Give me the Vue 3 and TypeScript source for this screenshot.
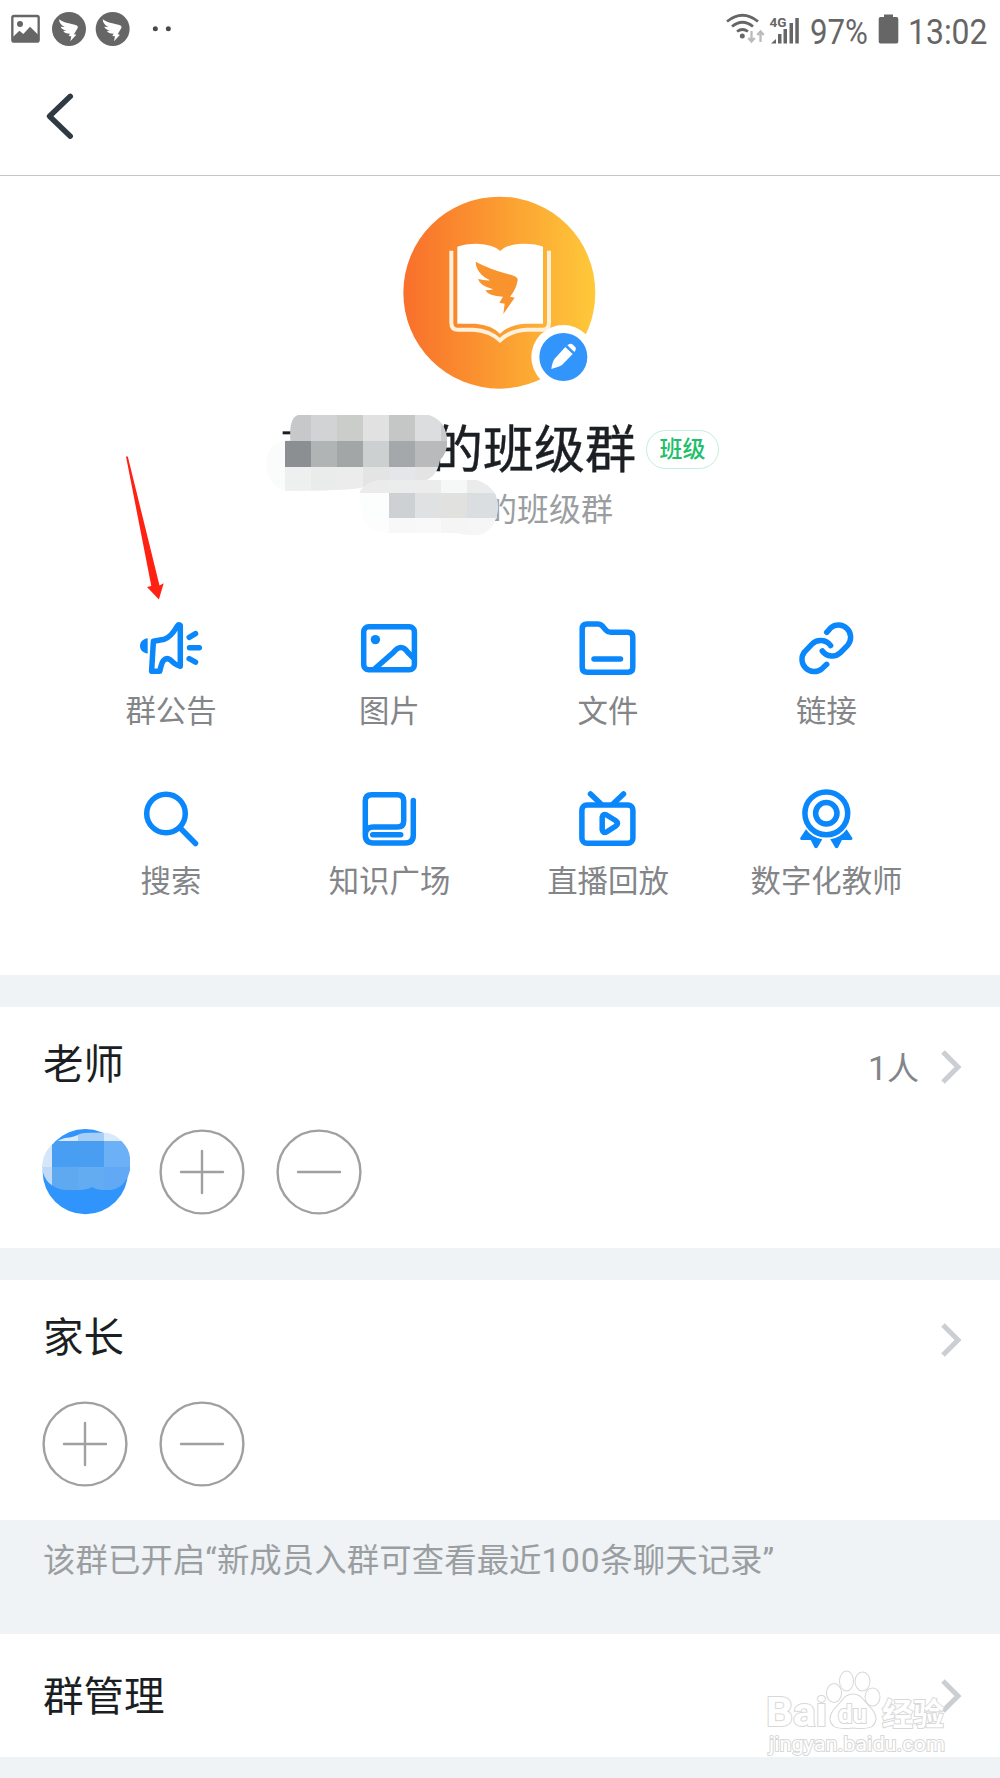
<script setup lang="ts">
interface Action {
  key: string
  label: string
}

interface Cell {
  x: number
  y: number
  w: number
  h: number
  fill: string
}

const actions: Action[] = [
  { key: 'notice', label: '群公告' },
  { key: 'image', label: '图片' },
  { key: 'file', label: '文件' },
  { key: 'link', label: '链接' },
  { key: 'search', label: '搜索' },
  { key: 'book', label: '知识广场' },
  { key: 'live', label: '直播回放' },
  { key: 'medal', label: '数字化教师' },
]

const row = (y: number, h: number, xs: number[], fills: string[]): Cell[] =>
  fills.map((fill, i) => ({ x: xs[i], y, w: xs[i + 1] - xs[i], h, fill }))

const upperX = [40, 106, 183, 261, 339, 417, 495, 573, 620]
const lowerX = [320, 417, 495, 573, 650, 760]
const faceX = [120, 156, 234, 312, 395]

const upperCells: Cell[] = [
  ...row(44, 78, upperX, ['#c6c8ca', '#c6c8ca', '#d2d3d5', '#cbcdcb', '#e1e1e1', '#c5c7c6', '#dcdddf', '#c9cacb']),
  ...row(122, 78, upperX, ['#fafbfb', '#8b8f91', '#b0b4b5', '#a2a6a7', '#ccd0d1', '#a4a8ab', '#b9babc', '#b9b9ba']),
  ...row(200, 80, upperX, ['#fafbfb', '#eef0f0', '#eaecec', '#ececec', '#e4e4e4', '#e5e6e9', '#e4e4e5', '#e4e4e5']),
]
const lowerCells: Cell[] = [
  ...row(236, 42, lowerX, ['#ebebeb', '#ebecec', '#ececec', '#f6f8f7', '#ebebeb']),
  ...row(278, 77, lowerX, ['#fcfdfd', '#cdd1d4', '#e0e1e3', '#e1e1e0', '#dadee1']),
  ...row(355, 55, lowerX, ['#fdfdfd', '#f8f8f8', '#f9f9f9', '#f5f5f5', '#f6f6f6']),
]
const faceCells: Cell[] = [
  ...row(510, 33, faceX, ['#d8e8f9', '#d9eafb', '#a5cff8', '#d9eafb']),
  ...row(543, 77, faceX, ['#d5e6f8', '#489ef2', '#4a9ef2', '#6cb0f6']),
  ...row(620, 75, faceX, ['#bfd9f6', '#5ea9f0', '#63acf1', '#61a9f4']),
]
</script>

<template>
  <div class="screen">
    <header class="status">
      <svg class="status-left" width="200" height="60" viewBox="0 0 600 180">
        <rect x="37" y="48" width="79" height="77" rx="5" fill="none" stroke="#666" stroke-width="7" />
        <circle cx="60" cy="72" r="9" fill="#666" />
        <path d="M38 112 58 92 70 102 90 80 116 106V126H38Z" fill="#666" />
        <g v-for="dx in [0, 131]" :key="dx" :transform="`translate(${dx} 0)`">
          <circle cx="207" cy="87" r="51" fill="#666" />
          <path
            d="M177 58Q192 69 224 74Q236 77 233 84L222 103 229 104 211 124 214 109 206 108 210 101Q194 101 190 93L199 92Q184 88 182 80L194 81Q178 73 177 58Z"
            fill="#fff"
          />
        </g>
        <circle cx="466" cy="86" r="7.500" fill="#4a4a4a" />
        <circle cx="505" cy="86" r="7.500" fill="#4a4a4a" />
      </svg>
      <svg class="status-right" width="300" height="60" viewBox="0 0 300 60">
        <g fill="none" stroke="#666" stroke-width="2.700">
          <path d="M27 21.500Q42.500 9 58 21.500" />
          <path d="M32 26.500Q42.500 18 53 26.500" />
          <path d="M37 31.500Q42.500 27.500 48 31.500" />
        </g>
        <circle cx="42.300" cy="36" r="2.500" fill="#666" />
        <g fill="none" stroke="#bbb" stroke-width="2.300">
          <path d="M51.500 31V41M48.300 38 51.500 41.500 54.700 38" />
          <path d="M60.500 42V32M57.300 35 60.500 31.500 63.700 35" />
        </g>
        <text x="69.500" y="27" font-size="12.500" font-weight="700" textLength="17" lengthAdjust="spacingAndGlyphs">4G</text>
        <g fill="#666">
          <path d="M71 43.500 76 39V43.500Z" />
          <rect x="78" y="34" width="3.500" height="9.500" />
          <rect x="83.500" y="29" width="3.500" height="14.500" />
          <rect x="89.500" y="23" width="3.500" height="20.500" />
          <rect x="95.300" y="18" width="3.500" height="25.500" />
          <path d="M180.500 17H184V14.500H193V17H196.500Q198.300 17 198.300 19V41.500Q198.300 43.500 196.500 43.500H180.500Q178.700 43.500 178.700 41.500V19Q178.700 17 180.500 17Z" />
        </g>
        <text x="110" y="43.500" font-size="35.500" textLength="58" lengthAdjust="spacingAndGlyphs">97%</text>
        <text x="208" y="43.500" font-size="35.500" textLength="79.500" lengthAdjust="spacingAndGlyphs">13:02</text>
      </svg>
    </header>

    <nav class="nav">
      <svg width="40" height="60" viewBox="0 0 40 60">
        <path d="M30.300 10.300 9.500 30.200 30.300 50.200" fill="none" stroke="#303a45" stroke-width="5.400" stroke-linecap="round" stroke-linejoin="round" />
      </svg>
    </nav>

    <section class="profile">
      <svg class="avatar" width="220" height="220" viewBox="0 0 660 660">
        <defs>
          <linearGradient id="sun" x1="0" y1="0" x2="1" y2="0">
            <stop offset="0" stop-color="#f96f2b" />
            <stop offset=".5" stop-color="#fb9c31" />
            <stop offset="1" stop-color="#fec93a" />
          </linearGradient>
        </defs>
        <circle cx="328" cy="338" r="288" fill="url(#sun)" />
        <path d="M184 212V428Q184 449 204 449H250Q300 452 330 481Q360 452 410 449H458Q477 449 477 428V212" fill="none" stroke="#fff1dc" stroke-width="12" />
        <path d="M202 200Q225 191 260 191Q312 193 331 213Q350 193 400 191Q440 191 459 200V431H405Q355 435 330 461Q305 435 257 431H202Z" fill="#fff" />
        <path
          d="M257 245Q300 268 350 281Q386 289 383 301Q378 330 360 350L374 353 340 402 344 371 328 368 339 350Q295 348 286 331Q300 331 310 328Q270 318 264 297Q285 302 300 301Q258 280 257 245Z"
          fill="#f8932e"
        />
        <circle cx="520" cy="531" r="96" fill="#fff" />
        <circle cx="520" cy="531" r="72" fill="#3295fb" />
        <path d="M526 501 548 522 516 555Q510 560 484 567Q487 545 494 536Z" fill="#fff" />
        <path d="M532 496Q540 488 549 494L556 502Q560 508 553 516Z" fill="#fff" />
      </svg>

      <div class="title-row">
        <h1>的班级群</h1>
        <span class="tag">班级</span>
      </div>
      <p class="subtitle">的班级群</p>

      <svg class="mosaic" width="480" height="150" viewBox="0 0 1440 450">
        <defs>
          <clipPath id="upper">
            <path d="M121 122Q116 44 150 44H535Q592 62 592 130Q588 165 570 180Q560 245 500 245H430L325 265Q290 272 110 273Q50 262 50 190Q52 125 110 122Z" />
          </clipPath>
          <clipPath id="lower">
            <path d="M328 278Q350 235 420 240H680Q745 262 745 325Q735 400 680 405Q640 405 620 399H417Q340 395 335 335Z" />
          </clipPath>
        </defs>
        <rect x="98" y="94" width="30" height="9" fill="#1b1f23" />
        <g clip-path="url(#upper)" shape-rendering="crispEdges">
          <rect v-for="(c, i) in upperCells" :key="i" :x="c.x" :y="c.y" :width="c.w" :height="c.h" :fill="c.fill" />
        </g>
        <g clip-path="url(#lower)" shape-rendering="crispEdges">
          <rect v-for="(c, i) in lowerCells" :key="i" :x="c.x" :y="c.y" :width="c.w" :height="c.h" :fill="c.fill" />
        </g>
      </svg>

      <svg class="pointer" width="50" height="150" viewBox="0 0 50 150">
        <path d="M6 6.500 7.800 6.500 39.500 135.500 43.700 133.300 38.900 149.500 27 137 31.300 136Z" fill="#ff2213" />
      </svg>

      <div class="actions">
        <div v-for="a in actions" :key="a.key" class="action">
          <svg class="icon" width="64" height="64" viewBox="0 0 64 64">
            <template v-if="a.key === 'notice'">
              <path class="solid" d="M9.700 22.300V37.500C4.500 37 2 33.500 2 30S4.500 22.800 9.700 22.300Z" />
              <path d="M15.400 25.200 13.600 55.200H21.800Q23.500 47 25.500 44.500Q28.500 41 32.500 44Q37 49 42.300 50.200V9.300Q40.500 8.300 39.300 10Q33 21 26.500 23.200Q21 24.200 15.400 25.200Z" />
              <path d="M51.200 21.300 57.500 17.600M51.500 31.700H61.300M51.200 42.700 57.500 46.200" />
            </template>
            <template v-else-if="a.key === 'image'">
              <rect x="6.700" y="10.700" width="50.700" height="43" rx="5" />
              <circle class="solid" cx="18.400" cy="23.600" r="4.700" />
              <path d="M17.500 53 36.300 36.500Q44.200 26.500 51 36.500L57 42.500" />
            </template>
            <template v-else-if="a.key === 'file'">
              <path d="M12 8H22.500Q25.500 8 27.500 10.200L31 14.200Q32.800 16.300 35.500 16.300H52.800Q57.800 16.300 57.800 21.300V51.300Q57.800 56.300 52.800 56.300H12.200Q7.200 56.300 7.200 51.300V13Q7.200 8 12 8Z" />
              <path d="M19 43H45.500" />
            </template>
            <template v-else-if="a.key === 'link'">
              <path d="M32.700 16.300 36.700 11.800A12.200 12.200 0 0 1 54 28.800L46.600 36.500A12.200 12.200 0 0 1 28.300 35" />
              <path d="M32.700 48.300 27.900 52.800A12.200 12.200 0 0 1 10.600 35.800L18 28.100A12.200 12.200 0 0 1 36.600 29.600" />
            </template>
            <template v-else-if="a.key === 'search'">
              <circle cx="28" cy="27.500" r="19.300" />
              <path d="M42.200 42 57.500 57.500" />
            </template>
            <template v-else-if="a.key === 'book'">
              <path d="M8.300 49V15Q8.300 8.700 14.600 8.700H40.400Q46.700 8.700 46.700 15V35Q46.700 41 40.400 41H16.300Q8.300 41 8.300 49Q8.300 57 16.300 57H48.300Q56.300 57 56.300 49V14.500" />
              <path d="M15.700 48.700H43.700" />
            </template>
            <template v-else-if="a.key === 'live'">
              <rect x="6.900" y="19" width="51" height="38.300" rx="5" />
              <path d="M15.500 8 25.500 17.500M48.500 8 38.500 17.500" />
              <path d="M27.200 31Q28 27.300 31.500 29L40.500 34.500Q44.500 37.400 40.500 40.200L31.500 46Q28 47.500 27.200 44Z" />
            </template>
            <template v-else>
              <circle cx="32.300" cy="27.300" r="21.400" />
              <circle cx="32.300" cy="27.300" r="10.700" />
              <path class="solid" d="M12 43.300Q17.500 51.500 28.300 53.300L23.500 61.500Q22 63 20.500 61.500L16.700 54H7.500Q5.800 53.800 6.200 52Z" />
              <path class="solid" d="M52.600 43.300Q47.100 51.500 36.300 53.300L41.100 61.500Q42.600 63 44.100 61.500L47.900 54H57.100Q58.800 53.800 58.400 52Z" />
            </template>
          </svg>
          <span>{{ a.label }}</span>
        </div>
      </div>
    </section>

    <section class="group teachers">
      <div class="group-head">
        <h2>老师</h2>
        <span class="count"><b>1</b>人</span>
        <svg class="chevron" width="22" height="36" viewBox="0 0 22 36"><path d="M3 3 18 18 3 33" /></svg>
      </div>
      <div class="members">
        <svg class="face" width="88" height="86" viewBox="126 506 264 258">
          <defs>
            <clipPath id="veil">
              <path d="M126 620Q130 552 195 533Q225 530 240 520Q270 516 320 517Q350 522 365 543Q392 570 390 600V630Q375 690 320 690Q290 690 277 680Q255 690 230 690H200Q132 682 126 620Z" />
            </clipPath>
          </defs>
          <circle cx="256" cy="634" r="128" fill="#3094fd" />
          <g clip-path="url(#veil)" shape-rendering="crispEdges">
            <rect v-for="(c, i) in faceCells" :key="i" :x="c.x" :y="c.y" :width="c.w" :height="c.h" :fill="c.fill" />
          </g>
        </svg>
        <svg class="round" width="86" height="86" viewBox="0 0 86 86"><circle cx="43" cy="43" r="41.400" /><path d="M22 43H64M43 22V64" /></svg>
        <svg class="round" width="86" height="86" viewBox="0 0 86 86"><circle cx="43" cy="43" r="41.400" /><path d="M22 43H64" /></svg>
      </div>
    </section>

    <section class="group parents">
      <div class="group-head">
        <h2>家长</h2>
        <svg class="chevron" width="22" height="36" viewBox="0 0 22 36"><path d="M3 3 18 18 3 33" /></svg>
      </div>
      <div class="members">
        <svg class="round" width="86" height="86" viewBox="0 0 86 86"><circle cx="43" cy="43" r="41.400" /><path d="M22 43H64M43 22V64" /></svg>
        <svg class="round" width="86" height="86" viewBox="0 0 86 86"><circle cx="43" cy="43" r="41.400" /><path d="M22 43H64" /></svg>
      </div>
    </section>

    <p class="hint">该群已开启“新成员入群可查看最近<b>100</b>条聊天记录”</p>

    <section class="manage">
      <h2>群管理</h2>
      <svg class="chevron" width="22" height="36" viewBox="0 0 22 36"><path d="M3 3 18 18 3 33" /></svg>
      <svg class="watermark" width="200" height="100" viewBox="0 0 200 100">
        <g fill="#fff" stroke="#d8d8d8" stroke-width="2" paint-order="stroke">
          <text x="5" y="66" font-size="41" font-weight="700" textLength="61" lengthAdjust="spacingAndGlyphs">Bai</text>
          <g transform="translate(-2 0)">
            <ellipse cx="75" cy="33" rx="7" ry="9" />
            <ellipse cx="87.500" cy="21" rx="6.500" ry="9.500" />
            <ellipse cx="103.500" cy="21.500" rx="7" ry="9" />
            <ellipse cx="113.500" cy="37" rx="7" ry="8.500" />
            <path d="M94 34.500Q101 34.500 105 41L113 50Q120 59 113 66Q108 69 94 67.500Q80 69 75 66Q68 59 75 50L83 41Q87 34.500 94 34.500Z" />
            <text x="79" y="63" font-size="26" font-weight="700" textLength="29" lengthAdjust="spacingAndGlyphs">du</text>
          </g>
          <text class="cjk" x="121" y="64.500" font-size="31" font-weight="700" textLength="62" lengthAdjust="spacingAndGlyphs">经验</text>
          <text x="8" y="90.500" font-size="21" textLength="176" lengthAdjust="spacingAndGlyphs">jingyan.baidu.com</text>
        </g>
      </svg>
    </section>
    <div class="tail"></div>
  </div>
</template>

<style>
body {
  margin: 0;
  background: #eff3f6;
}
</style>

<style scoped>
.screen {
  width: 1000px;
  height: 1778px;
  overflow: hidden;
  background: #eff3f6;
  font-family: Roboto, 'Noto Sans CJK SC', sans-serif;
}
svg {
  display: block;
  flex: none;
}
h1,
h2,
p,
b {
  margin: 0;
  font-weight: 400;
}
.status {
  display: flex;
  justify-content: space-between;
  height: 60px;
  background: #fff;
}
.status-right text {
  fill: #666;
}
.nav {
  display: flex;
  box-sizing: border-box;
  height: 116px;
  padding: 26px 0 0 40px;
  border-bottom: 1px solid #c6c6c6;
  background: #fff;
}
.profile {
  position: relative;
  box-sizing: border-box;
  height: 799px;
  padding-top: 4px;
  background: #fff;
}
.avatar {
  margin: 0 auto;
}
.title-row {
  display: flex;
  align-items: center;
  gap: 10px;
  height: 60px;
  margin-top: 19px;
  padding-left: 432px;
}
h1 {
  padding-top: 4px;
  font-size: 51px;
  line-height: 60px;
  color: #1b1f23;
  -webkit-text-stroke: 0.4px #1b1f23;
}
.tag {
  box-sizing: border-box;
  width: 73px;
  height: 39px;
  padding-top: 1.500px;
  border: 1.500px solid #c3efd8;
  border-radius: 20px;
  font-size: 23px;
  font-weight: 500;
  line-height: 36px;
  text-align: center;
  color: #22bf6a;
}
.subtitle {
  margin-top: 11px;
  padding-left: 485px;
  font-size: 32px;
  line-height: 40px;
  color: #9b9ea1;
}
.mosaic {
  position: absolute;
  left: 250px;
  top: 224px;
}
.pointer {
  position: absolute;
  left: 120px;
  top: 274px;
}
.actions {
  display: grid;
  grid-template-columns: repeat(4, 218.500px);
  row-gap: 56px;
  margin: 86px 0 0 61px;
}
.action {
  display: flex;
  flex-direction: column;
  align-items: center;
  gap: 11.500px;
  height: 114px;
  font-size: 30.400px;
  line-height: 40px;
  white-space: nowrap;
  color: #838588;
}
.action span {
  padding-left: 1.500px;
}
.icon {
  fill: none;
  stroke: #0a87fa;
  stroke-width: 5.500px;
  stroke-linecap: round;
  stroke-linejoin: round;
}
.icon .solid {
  fill: #0a87fa;
  stroke: none;
}
.group {
  box-sizing: border-box;
  background: #fff;
}
.teachers {
  height: 241px;
  margin-top: 32px;
}
.teachers .members {
  padding-top: 0.700px;
}
.parents {
  height: 240px;
  margin-top: 32px;
}
.group-head {
  display: flex;
  align-items: center;
  height: 121px;
  padding: 0 38px 0 43px;
}
h2 {
  flex: 1;
  padding-top: 2px;
  font-size: 40.500px;
  line-height: 60px;
  color: #1b1f23;
}
.group-head h2 {
  margin-top: -7px;
}
.count {
  margin: 1px 21px 0 0;
  font-size: 32px;
  line-height: 40px;
  color: #838588;
}
.count b {
  font-size: 34px;
}
.chevron {
  fill: none;
  stroke: #cbced2;
  stroke-width: 5px;
}
.group-head .chevron {
  margin-top: -2px;
}
.members {
  display: flex;
  gap: 31px;
  padding-left: 42px;
}
.face {
  margin-right: -2px;
}
.round {
  fill: none;
  stroke: #a0a0a0;
  stroke-width: 2.400px;
  stroke-linecap: round;
}
.hint {
  box-sizing: border-box;
  height: 114px;
  padding: 21px 0 0 43px;
  font-size: 32.400px;
  line-height: 40px;
  letter-spacing: 0.080px;
  white-space: nowrap;
  color: #9b9ea1;
}
.hint b {
  font-size: 33.500px;
  letter-spacing: 0.700px;
}
.manage {
  position: relative;
  display: flex;
  align-items: center;
  box-sizing: border-box;
  height: 123px;
  padding: 0 38px 0 43px;
  background: #fff;
}
.watermark {
  position: absolute;
  left: 761px;
  top: 26px;
}
.watermark .cjk {
  font-family: 'Noto Sans CJK SC', sans-serif;
}
.tail {
  height: 21px;
}
</style>
